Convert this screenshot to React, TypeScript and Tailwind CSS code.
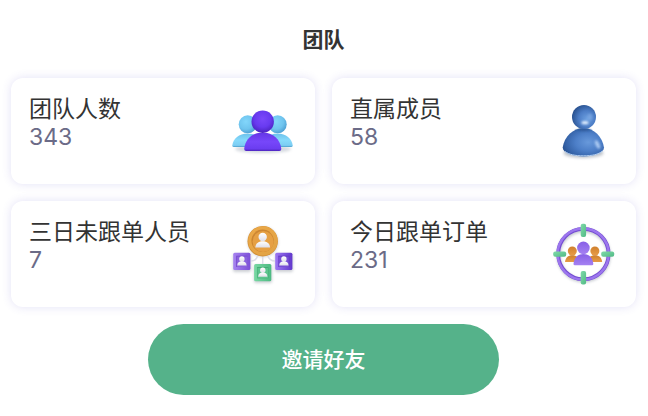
import React from 'react';

interface StatCard {
  key: string;
  label: string;
  value: number;
  icon: React.FC;
}

const iconClass = 'w-[72px] h-[72px] shrink-0';

const TeamIcon: React.FC = () => (
  <svg viewBox="0 0 72 72" className={iconClass} aria-hidden="true">
    <defs>
      <radialGradient id="team-side" cx="0.4" cy="0.35" r="0.7">
        <stop offset="0" stopColor="#82d6fb" />
        <stop offset="0.6" stopColor="#6fc4ee" />
        <stop offset="1" stopColor="#4a9cd0" />
      </radialGradient>
      <linearGradient id="team-side-body" x1="0" y1="0" x2="0" y2="1">
        <stop offset="0" stopColor="#6cc2ec" />
        <stop offset="0.5" stopColor="#86dafb" />
        <stop offset="0.88" stopColor="#7ccdf3" />
        <stop offset="1" stopColor="#4a9cc8" />
      </linearGradient>
      <radialGradient id="team-head" cx="0.5" cy="0.38" r="0.65">
        <stop offset="0" stopColor="#7a48fa" />
        <stop offset="0.55" stopColor="#683af0" />
        <stop offset="1" stopColor="#4820bb" />
      </radialGradient>
      <linearGradient id="team-body" x1="0" y1="0" x2="0" y2="1">
        <stop offset="0" stopColor="#6435e6" />
        <stop offset="0.5" stopColor="#7747fa" />
        <stop offset="0.88" stopColor="#6b3df0" />
        <stop offset="1" stopColor="#4d25bd" />
      </linearGradient>
      <filter id="team-blur" x="-20%" y="-60%" width="140%" height="220%">
        <feGaussianBlur stdDeviation="1.8" />
      </filter>
    </defs>
    <ellipse cx="36" cy="54" rx="28" ry="4" fill="#64748b" opacity="0.28" filter="url(#team-blur)" />
    <circle cx="20.7" cy="29.3" r="9" fill="url(#team-side)" />
    <circle cx="50.7" cy="29.3" r="9" fill="url(#team-side)" />
    <path d="M5.3 50.5C6 43.5 12 38.5 20.5 38.5S35 43.5 35.5 52H7Q5.3 52 5.3 50.5Z" fill="url(#team-side-body)" />
    <path d="M65.7 50.5C65 43.5 59 38.5 50.5 38.5S36 43.5 35.5 52H64Q65.7 52 65.7 50.5Z" fill="url(#team-side-body)" />
    <path d="M17.2 54C18 44.5 25.5 37.500 35.7 37.5S53.5 44.5 54.3 54Q54.3 56 52.3 56H19.2Q17.2 56 17.2 54Z" fill="url(#team-body)" />
    <circle cx="35.7" cy="26.7" r="11.2" fill="url(#team-head)" />
  </svg>
);

const MemberIcon: React.FC = () => (
  <svg viewBox="0 0 72 72" className={iconClass} aria-hidden="true">
    <defs>
      <radialGradient id="member-head" cx="0.62" cy="0.58" r="0.68">
        <stop offset="0" stopColor="#6c9fe0" />
        <stop offset="0.5" stopColor="#4c7dc6" />
        <stop offset="1" stopColor="#234a86" />
      </radialGradient>
      <radialGradient id="member-body" cx="0.62" cy="0.5" r="0.68">
        <stop offset="0" stopColor="#6899db" />
        <stop offset="0.45" stopColor="#4d7fc8" />
        <stop offset="0.8" stopColor="#3563a8" />
        <stop offset="1" stopColor="#274f8d" />
      </radialGradient>
      <filter id="member-blur" x="-30%" y="-60%" width="160%" height="220%">
        <feGaussianBlur stdDeviation="1.8" />
      </filter>
      <filter id="member-shine" x="-60%" y="-60%" width="220%" height="220%">
        <feGaussianBlur stdDeviation="0.9" />
      </filter>
    </defs>
    <ellipse cx="35.5" cy="58" rx="20" ry="5" fill="#475569" opacity="0.35" filter="url(#member-blur)" />
    <path d="M14.7 52.5C16 42 25 33 35.5 33S54.500 42 56 52.5C56 58 46 61.500 35.5 61.5S14.700 58 14.7 52.5Z" fill="url(#member-body)" />
    <path d="M17 56.5C21 59.5 27 60.8 35.5 60.800S50.500 59.500 54.500 56" fill="none" stroke="#b4d0f2" strokeWidth="1" />
    <ellipse cx="36" cy="34.5" rx="7" ry="1.2" fill="#1e467f" opacity="0.6" filter="url(#member-shine)" />
    <circle cx="36" cy="22" r="12" fill="url(#member-head)" />
    <ellipse cx="37" cy="27.7" rx="3.6" ry="1.6" fill="#e3f0ff" filter="url(#member-shine)" />
    <ellipse cx="42" cy="22" rx="2.500" ry="3.500" fill="#8db6eb" opacity="0.5" filter="url(#member-shine)" />
    <ellipse cx="49.5" cy="49.5" rx="1.8" ry="4.5" fill="#c0dafb" opacity="0.85" transform="rotate(-25 49.5 49.5)" filter="url(#member-shine)" />
  </svg>
);

const NetworkIcon: React.FC = () => (
  <svg viewBox="0 0 72 72" className={iconClass} aria-hidden="true">
    <defs>
      <linearGradient id="net-white" x1="0" y1="0" x2="0" y2="1">
        <stop offset="0" stopColor="#ffffff" />
        <stop offset="1" stopColor="#dfdee9" />
      </linearGradient>
      <linearGradient id="net-coin" x1="0" y1="0" x2="1" y2="1">
        <stop offset="0" stopColor="#eda947" />
        <stop offset="1" stopColor="#e0a245" />
      </linearGradient>
      <linearGradient id="net-left" x1="0" y1="0" x2="1" y2="0">
        <stop offset="0" stopColor="#a683ef" />
        <stop offset="1" stopColor="#7d50d8" />
      </linearGradient>
      <linearGradient id="net-right" x1="0" y1="0" x2="1" y2="0">
        <stop offset="0" stopColor="#9d77f2" />
        <stop offset="1" stopColor="#6238cc" />
      </linearGradient>
      <linearGradient id="net-green" x1="0" y1="0" x2="1" y2="0">
        <stop offset="0" stopColor="#78d8a3" />
        <stop offset="1" stopColor="#4dba82" />
      </linearGradient>
      <filter id="net-blur" x="-30%" y="-30%" width="160%" height="160%">
        <feGaussianBlur stdDeviation="1.8" />
      </filter>
      <g id="net-person">
        <circle cx="8.7" cy="6.3" r="2.7" fill="url(#net-white)" />
        <path d="M4 12.7C4.200 9.8 6 8.600 8.7 8.6S13.200 9.800 13.4 12.7Z" fill="url(#net-white)" />
      </g>
    </defs>
    <g fill="#334155" opacity="0.25" filter="url(#net-blur)">
      <circle cx="36" cy="24" r="15" />
      <rect x="6" y="36" width="18" height="18" rx="2" />
      <rect x="48" y="36" width="18" height="18" rx="2" />
      <rect x="27" y="47" width="18" height="18" rx="2" />
    </g>
    <path d="M35.7 37V48M24 43C28 43 30 40.5 31 37M48 43C44 43 41.5 40.5 40.5 37" fill="none" stroke="#dcdde8" strokeWidth="1.5" />
    <circle cx="35.7" cy="23.2" r="15.2" fill="#d29037" />
    <circle cx="35.9" cy="22.9" r="14.7" fill="url(#net-coin)" />
    <circle cx="35.6" cy="22.8" r="11.2" fill="#cc8632" />
    <circle cx="36.1" cy="23.500" r="10.5" fill="#e6a044" />
    <circle cx="35.7" cy="19" r="4.200" fill="url(#net-white)" />
    <path d="M28.3 29.5C28.5 25.5 31.3 23.2 35.7 23.2S42.9 25.5 43.1 29.5Z" fill="url(#net-white)" />
    <g transform="translate(6.2 34.7)">
      <rect width="17.2" height="17.2" rx="1.5" fill="url(#net-left)" />
      <rect x="3" y="3" width="11.3" height="11.3" fill="#7448cc" />
      <rect x="3.800" y="3.800" width="10.5" height="10.5" fill="#8a62dd" />
      <use href="#net-person" />
    </g>
    <g transform="translate(48.2 34.7)">
      <rect width="17.2" height="17.2" rx="1.5" fill="url(#net-right)" />
      <rect x="3" y="3" width="11.3" height="11.3" fill="#6137c2" />
      <rect x="3" y="3.800" width="10.5" height="10.5" fill="#774ed6" />
      <use href="#net-person" />
    </g>
    <g transform="translate(27.1 46)">
      <rect width="17.2" height="17.2" rx="1.5" fill="url(#net-green)" />
      <rect x="3" y="3" width="11.3" height="11.3" fill="#3fa771" />
      <rect x="3.400" y="3.800" width="10.5" height="10.5" fill="#5cc48d" />
      <use href="#net-person" />
    </g>
  </svg>
);

const TargetIcon: React.FC = () => (
  <svg viewBox="0 0 72 72" className={iconClass} aria-hidden="true">
    <defs>
      <linearGradient id="target-purple" x1="0" y1="0" x2="0" y2="1">
        <stop offset="0" stopColor="#8860e6" />
        <stop offset="1" stopColor="#a581f2" />
      </linearGradient>
      <linearGradient id="target-orange" x1="0" y1="0" x2="0" y2="1">
        <stop offset="0" stopColor="#d0802c" />
        <stop offset="1" stopColor="#e79c48" />
      </linearGradient>
      <linearGradient id="target-green" x1="0" y1="0" x2="1" y2="1">
        <stop offset="0" stopColor="#80dba9" />
        <stop offset="1" stopColor="#51b985" />
      </linearGradient>
      <filter id="target-blur" x="-20%" y="-20%" width="140%" height="140%">
        <feGaussianBlur stdDeviation="1.6" />
      </filter>
    </defs>
    <circle cx="35.7" cy="37.5" r="25" fill="none" stroke="#475569" strokeWidth="3.5" opacity="0.35" filter="url(#target-blur)" />
    <circle cx="35.4" cy="36" r="25.2" fill="none" stroke="#744cd2" strokeWidth="3.8" />
    <circle cx="35.2" cy="36" r="25.5" fill="none" stroke="#9c76ee" strokeWidth="2.4" />
    <circle cx="24.3" cy="33" r="4.5" fill="url(#target-orange)" />
    <circle cx="46.9" cy="33" r="4.5" fill="url(#target-orange)" />
    <path d="M17 44C17.5 39.8 20 37.3 24.3 37.3S31 40 31.5 44Z" fill="url(#target-orange)" />
    <path d="M39.5 44C40 40 42.5 37.3 46.9 37.3S53.7 39.8 54.2 44Z" fill="url(#target-orange)" />
    <path d="M25.5 46C26 40 29.5 36 35.4 36S44.8 40 45.3 46Q45.3 47.3 44 47.3H26.8Q25.5 47.3 25.5 46Z" fill="url(#target-purple)" />
    <circle cx="35.4" cy="29.9" r="6.300" fill="url(#target-purple)" />
    <g fill="url(#target-green)">
      <rect x="32.7" y="5.7" width="5.4" height="13.3" rx="2" />
      <rect x="32.7" y="53" width="5.4" height="13.5" rx="2" />
      <rect x="5.2" y="33.5" width="13" height="5.3" rx="2" />
      <rect x="53.2" y="33.5" width="13" height="5.3" rx="2" />
    </g>
  </svg>
);

const stats: StatCard[] = [
  { key: 'team', label: '团队人数', value: 343, icon: TeamIcon },
  { key: 'direct', label: '直属成员', value: 58, icon: MemberIcon },
  { key: 'inactive', label: '三日未跟单人员', value: 7, icon: NetworkIcon },
  { key: 'today', label: '今日跟单订单', value: 231, icon: TargetIcon }
];

export default function App() {
  return (
    <main className="min-h-screen bg-white pt-6 pr-3 pb-5 pl-[11px] font-['Inter','Noto_Sans_CJK_SC',sans-serif] text-[#333333]">
      <h1 className="text-center text-[21px] leading-8 font-bold">团队</h1>

      {/* Team stats */}
      <section className="mt-[22px] grid grid-cols-2 gap-x-[17px] gap-y-[17px]">
        {stats.map(({ key, label, value, icon: Icon }) => (
          <div
            key={key}
            className="flex items-center justify-between rounded-xl bg-white py-[17px] pr-4 pl-[18px] shadow-[0_0_10px_rgba(80,70,200,0.16)]"
          >
            <dl className="self-start text-[23px] leading-7">
              <dt>{label}</dt>
              <dd className="text-[#6b6b87]">{value}</dd>
            </dl>
            <Icon />
          </div>
        ))}
      </section>

      <button
        type="button"
        className="mx-auto mt-[17px] block h-[71px] w-9/16 rounded-full bg-[#55b28a] text-[21px] leading-8 font-medium text-white"
      >
        邀请好友
      </button>
    </main>
  );
}
